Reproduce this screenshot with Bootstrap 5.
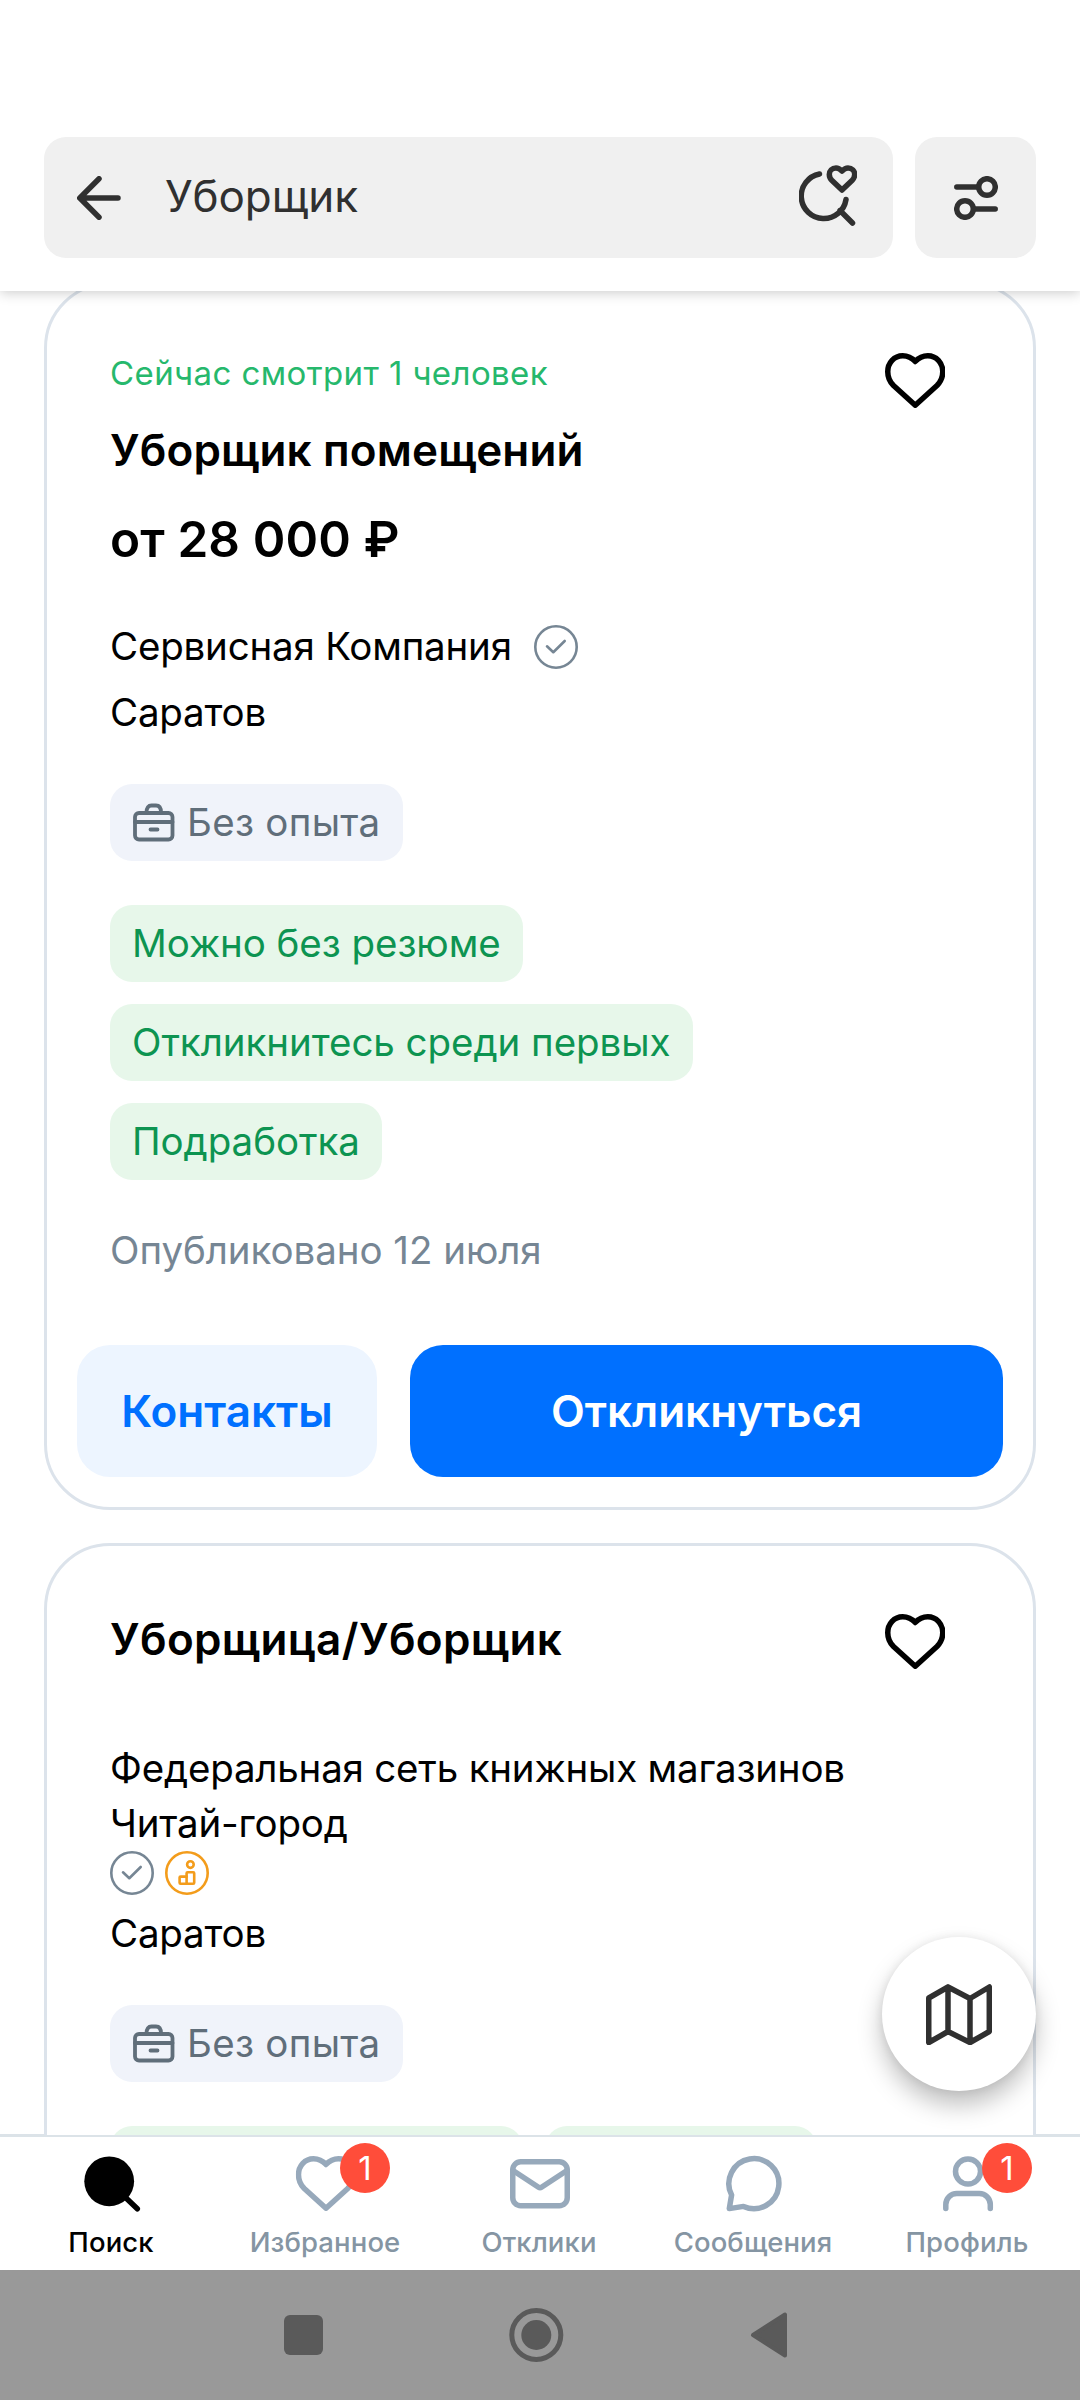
<!DOCTYPE html>
<html lang="ru">
<head>
<meta charset="utf-8">
<meta name="viewport" content="width=device-width, initial-scale=1">
<title>Уборщик</title>
<link href="https://cdn.jsdelivr.net/npm/bootstrap@5.3.0/dist/css/bootstrap.min.css" rel="stylesheet">
<style>
  body { font-family: Inter, "Noto Sans", sans-serif; color: #000; background: #fff; }
  .screen { width: 1080px; height: 2400px; }

  .topbar { height: 291px; padding: 137px 44px 0; gap: 22px; box-shadow: 0 2px 12px rgba(0,0,0,.2); z-index: 3; }
  .searchbox { height: 121px; background: #f0f0f0; border-radius: 22px; padding: 0 36px 0 33px; color: #303030; }
  .query { font-size: 44px; line-height: 55px; margin-left: 44px; padding-bottom: 2px; letter-spacing: -.1px; }
  .saved-search { margin-bottom: 3px; }
  .filterbtn { width: 121px; height: 121px; background: #f0f0f0; border-radius: 22px; color: #303030; }

  .feed { height: 1846px; padding: 0 44px; }
  .feed-inner { margin-top: -9px; }
  .vacancy { --bs-card-bg: #fff; border: 3px solid #dce3eb; border-radius: 66px; padding: 0 30px; margin-bottom: 33px; }
  .vacancy-top { padding: 66px 58px 0 33px; }
  .vacancy-rest { padding: 0 33px; }
  .fav { width: 60.5px; height: 55px; margin-top: 2px; }
  .viewers { font-size: 33px; line-height: 44px; color: #26b86c; margin-bottom: 28px; letter-spacing: .4px; }
  .job-name { font-size: 44px; line-height: 55px; font-weight: 600; letter-spacing: .15px; }
  .job-name-wide { letter-spacing: .35px; }
  .pay { font-size: 49.5px; line-height: 66px; font-weight: 600; margin-top: 28px; letter-spacing: .1px; }
  .line-text { font-size: 38.5px; line-height: 55px; letter-spacing: -.2px; font-weight: 370; }
  .company { margin-top: 47px; }
  .company .mark-ico { margin: 6px 0 0 22px; }
  .company-long { margin-top: 72px; }
  .marks { gap: 11px; }
  .town { margin-top: 11px; }
  .tag-line { gap: 22px; margin-top: 44px; }
  .tag { height: 77px; border-radius: 22px; padding: 0 22px; font-size: 38.5px; line-height: 77px; white-space: nowrap; letter-spacing: -.05px; font-weight: 370; }
  .tag-gray { background: #f0f3fa; color: #606e7a; letter-spacing: .3px; }
  .tag-gray .ico { margin: 0 12px 0 1px; }
  .tag-green { background: #e7f7ea; color: #0d9451; }
  .published { color: #768694; margin-top: 43px; letter-spacing: -.05px; }
  .mark-ico { width: 44px; height: 44px; color: #768694; }
  .mark-gold { color: #f39c1b; }
  .actions { gap: 33px; margin-top: 67px; padding-bottom: 30px; }
  .cta { height: 132px; border-radius: 33px; font-size: 44px; font-weight: 600; line-height: 55px; border: 0; }
  .cta-contacts { width: 300px; background: #edf5ff; color: #0070ff; }
  .cta-apply { background: #0070ff; color: #fff; }

  .fab { left: 882px; top: 1937px; width: 154px; height: 154px; background: #fff; color: #303030; box-shadow: 0 14px 24px rgba(0,0,0,.25), 0 0 10px rgba(0,0,0,.08); z-index: 2; }

  .tabs { height: 136px; margin-top: -3px; padding: 0 5px; z-index: 4; color: #97a9bb;
    background:
      linear-gradient(#dce3e8,#dce3e8) 0 0 / 44px 1px no-repeat,
      linear-gradient(#dce3e8,#dce3e8) 100% 0 / 44px 1px no-repeat,
      linear-gradient(#dce3e8,#dce3e8) 0 1px / 100% 2px no-repeat,
      linear-gradient(#fff,#fff) 0 3px / 100% 133px no-repeat; }
  .tab { width: 214px; padding-top: 17px; }
  .tab-icon { width: 66px; height: 66px; }
  .tab-label { font-size: 27.5px; line-height: 33px; font-weight: 460; letter-spacing: .1px; color: #8595a3; margin-top: 9px; padding-right: 2px; }
  .tab-on, .tab-on .tab-label { color: #000; }
  .count { left: 47px; top: -8px; width: 50px; height: 50px; background: #ff4d3a; color: #fff; font-size: 33px; line-height: 50px; }

  .sysbar { height: 130px; background: #999; }
  .ico { fill: none; stroke: currentColor; stroke-width: 5.5; stroke-linecap: round; stroke-linejoin: round; display: block; flex: none; }
</style>
</head>
<body>
<svg width="0" height="0" class="position-absolute">
  <symbol id="heart" viewBox="0 0 60.5 55"><path d="M30.25 8.5C27 5 22.5 2.75 17.7 2.75C9.300 2.750 2.750 9.800 2.750 18.700C2.750 24.500 4.500 28.500 8.500 32.500L30.250 52.200L52 32.500C56 28.500 57.750 24.500 57.750 18.700C57.750 9.800 51.200 2.750 42.800 2.750C38 2.750 33.500 5 30.250 8.500Z"/></symbol>
  <symbol id="verified" viewBox="0 0 44 44"><circle cx="22" cy="22" r="20.700" stroke-width="2.600"/><path d="M13 21.300L19.300 27.200L30.700 16" stroke-width="2.600"/></symbol>
  <symbol id="rated" viewBox="0 0 44 44"><g stroke-width="2.600"><circle cx="22" cy="22" r="20.700"/><circle cx="25.400" cy="13.600" r="3.300"/><rect x="21.600" y="21.300" width="7.600" height="11.400" rx="1"/><path d="M21.600 25.600H15.600Q14.600 25.600 14.600 26.600V31.700Q14.600 32.700 15.600 32.700H21.600"/></g></symbol>
  <symbol id="case" viewBox="0 0 42 40"><g stroke-width="3.800"><rect x="2" y="10" width="37.500" height="26.500" rx="4"/><path d="M2 19H39.500M17.500 26.500H24.500M13.500 9.500C13.500 4.500 15.500 2.500 18.500 2.500H23C26 2.500 28 4.500 28 9.500"/></g></symbol>
</svg>

<div class="screen d-flex flex-column position-relative overflow-hidden">
  <header class="topbar d-flex bg-white position-relative flex-shrink-0">
    <div class="searchbox d-flex align-items-center flex-grow-1">
      <svg class="ico" width="44" height="44" viewBox="0 0 44 44"><path d="M41 22H3M22 2.800L2.800 22L22 41.200"/></svg>
      <div class="query flex-grow-1">Уборщик</div>
      <svg class="ico saved-search" width="58" height="62" viewBox="0 0 58 62"><path d="M20.500 9A22.500 22.500 0 1 0 47 34.500M41 45.500L53.500 58"/><path d="M43 6C41 4 39 3 37 3C33 3 30.300 6 30.300 9.500C30.300 12 31 13.500 33 15.500L43 25L53 15.500C55 13.500 55.700 12 55.700 9.500C55.700 6 53 3 49 3C47 3 45 4 43 6Z"/></svg>
    </div>
    <div class="filterbtn d-flex align-items-center justify-content-center">
      <svg class="ico" width="44" height="44" viewBox="0 0 44 44"><circle cx="33" cy="11" r="8.300"/><path d="M2.800 11H24M20 33H41.200"/><circle cx="11" cy="33" r="8.300"/></svg>
    </div>
  </header>

  <main class="feed overflow-hidden flex-shrink-0">
    <div class="feed-inner">
      <article class="vacancy card">
        <div class="vacancy-top d-flex align-items-start">
          <div class="flex-grow-1">
            <div class="viewers">Сейчас смотрит 1 человек</div>
            <div class="job-name">Уборщик помещений</div>
            <div class="pay">от 28 000 ₽</div>
          </div>
          <svg class="ico fav"><use href="#heart"/></svg>
        </div>
        <div class="vacancy-rest">
          <div class="line-text company d-flex">Сервисная Компания <svg class="ico mark-ico"><use href="#verified"/></svg></div>
          <div class="line-text town">Саратов</div>
          <div class="tag-line d-flex">
            <div class="tag tag-gray d-flex align-items-center"><svg class="ico" width="42" height="40"><use href="#case"/></svg>Без опыта</div>
          </div>
          <div class="tag-line d-flex flex-column align-items-start">
            <div class="tag tag-green">Можно без резюме</div>
            <div class="tag tag-green">Откликнитесь среди первых</div>
            <div class="tag tag-green">Подработка</div>
          </div>
          <div class="line-text published">Опубликовано 12 июля</div>
        </div>
        <div class="actions d-flex">
          <button type="button" class="btn cta cta-contacts">Контакты</button>
          <button type="button" class="btn cta cta-apply flex-grow-1">Откликнуться</button>
        </div>
      </article>

      <article class="vacancy card">
        <div class="vacancy-top d-flex align-items-start">
          <div class="job-name job-name-wide flex-grow-1">Уборщица/Уборщик</div>
          <svg class="ico fav"><use href="#heart"/></svg>
        </div>
        <div class="vacancy-rest">
          <div class="line-text company-long">Федеральная сеть книжных магазинов<br>Читай-город</div>
          <div class="marks d-flex">
            <svg class="ico mark-ico"><use href="#verified"/></svg>
            <svg class="ico mark-ico mark-gold"><use href="#rated"/></svg>
          </div>
          <div class="line-text town">Саратов</div>
          <div class="tag-line d-flex">
            <div class="tag tag-gray d-flex align-items-center"><svg class="ico" width="42" height="40"><use href="#case"/></svg>Без опыта</div>
          </div>
          <div class="tag-line d-flex">
            <div class="tag tag-green">Можно без резюме</div>
            <div class="tag tag-green">Подработка</div>
          </div>
        </div>
      </article>
    </div>
  </main>

  <button type="button" class="fab btn border-0 rounded-circle p-0 position-absolute d-flex align-items-center justify-content-center">
    <svg class="ico" width="66" height="61" viewBox="0 0 66 61"><path d="M2.750 14L22 3L44 14.500L63.300 3V47.500L44 58.500L22 47.500L2.750 58.500ZM22 3V47.500M44 14.500V58.500"/></svg>
  </button>

  <nav class="tabs d-flex position-relative flex-shrink-0">
    <div class="tab tab-on d-flex flex-column align-items-center">
      <svg class="ico tab-icon" viewBox="0 0 66 66"><circle cx="30.200" cy="30.300" r="24.900" fill="currentColor" stroke="none"/><path d="M46 46L58.300 57.800"/></svg>
      <div class="tab-label">Поиск</div>
    </div>
    <div class="tab d-flex flex-column align-items-center">
      <div class="position-relative">
        <svg class="ico tab-icon" viewBox="0 0 66 66"><use href="#heart" x="2.750" y="5" width="60.500" height="55"/></svg>
        <span class="count position-absolute rounded-circle text-center">1</span>
      </div>
      <div class="tab-label">Избранное</div>
    </div>
    <div class="tab d-flex flex-column align-items-center">
      <svg class="ico tab-icon" viewBox="0 0 66 66"><rect x="5.750" y="10.750" width="54.500" height="44" rx="8"/><path d="M6 19.500L31.500 36.300Q33 37.300 34.500 36.300L60 19.500"/></svg>
      <div class="tab-label">Отклики</div>
    </div>
    <div class="tab d-flex flex-column align-items-center">
      <svg class="ico tab-icon" viewBox="0 0 66 66"><path d="M10.600 44A25 25 0 1 1 22.500 55.400L8.300 57.600Z"/></svg>
      <div class="tab-label">Сообщения</div>
    </div>
    <div class="tab d-flex flex-column align-items-center">
      <div class="position-relative">
        <svg class="ico tab-icon" viewBox="0 0 66 66"><circle cx="33" cy="20.500" r="12.500"/><path d="M10.800 57.500V53.500A11 11 0 0 1 21.800 42.500H44.300A11 11 0 0 1 55.300 53.500V57.500"/></svg>
        <span class="count position-absolute rounded-circle text-center">1</span>
      </div>
      <div class="tab-label">Профиль</div>
    </div>
  </nav>

  <footer class="sysbar flex-shrink-0">
    <svg class="d-block" width="1080" height="130" viewBox="0 0 1080 130" fill="#5a5a5a">
      <rect x="284" y="45" width="39" height="40" rx="6"/>
      <circle cx="536.300" cy="65" r="15"/>
      <circle cx="536.300" cy="65" r="24.500" fill="none" stroke="#5a5a5a" stroke-width="5"/>
      <path d="M753 65L785 44.500V85.500Z" stroke="#5a5a5a" stroke-width="4" stroke-linejoin="round"/>
    </svg>
  </footer>
</div>
<script src="https://cdn.jsdelivr.net/npm/bootstrap@5.3.0/dist/js/bootstrap.bundle.min.js"></script>
</body>
</html>
